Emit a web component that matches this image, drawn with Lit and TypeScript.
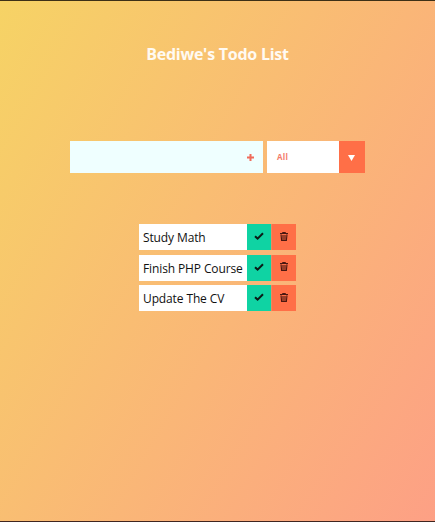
import { LitElement, html, css, svg } from "lit";
import { customElement, state } from "lit/decorators.js";

const checkIcon = html`<svg width="10" height="8" viewBox="0 0 10 8">
  <path d="M1 4.2 3.6 6.6 9 1.2" fill="none" stroke="#0b1c17" stroke-width="2" />
</svg>`;

const trashIcon = html`<svg width="8" height="9" viewBox="0 0 8 9">
  ${svg`<path d="M0 1.5h8M2.5 1.4V.5h3v.9" fill="none" stroke="#4a1710" stroke-width="1" />
  <path d="M1 2.4 1.6 8.4h4.8L7 2.4M3 3v4.6M5 3v4.6" fill="none" stroke="#4a1710" stroke-width="1.1" />`}
</svg>`;

@customElement("app-root")
export class AppRoot extends LitElement {
  static styles = css`
    :host {
      display: flex;
      flex-direction: column;
      align-items: center;
      box-sizing: border-box;
      height: 522px;
      border-top: 1px solid #3d3016;
      border-bottom: 1px solid #3f2520;
      background: linear-gradient(120deg, #f6d365 0%, #fda085 100%) border-box;
      font-family: "Open Sans", "Noto Sans", sans-serif;
    }
    h1 {
      margin: 41px 0 0;
      height: 24px;
      font-size: 16px;
      line-height: 24px;
      font-weight: 700;
      letter-spacing: -0.24px;
      color: #fffaf2;
      white-space: nowrap;
    }
    form {
      display: flex;
      margin: 75px 0 0;
      height: 32px;
    }
    .entry {
      display: flex;
      width: 193px;
      background: #efffff;
    }
    input {
      flex: 1;
      min-width: 0;
      border: 0;
      padding: 0 8px;
      background: none;
      outline: none;
    }
    button {
      border: 0;
      padding: 0;
      display: flex;
      align-items: center;
      justify-content: center;
    }
    .add {
      width: 25px;
      padding-top: 1px;
      background: none;
    }
    .filter {
      display: flex;
      width: 98px;
      margin-left: 4px;
      background: #fff;
    }
    .value {
      flex: 1;
      padding-left: 10px;
      font-size: 8px;
      line-height: 32px;
      font-weight: 700;
      letter-spacing: 0.3px;
      color: #f47d6c;
    }
    .arrow {
      width: 26px;
      background: #ff6f47;
      display: flex;
      align-items: center;
      justify-content: center;
    }
    .arrow svg {
      margin: 2px 1px 0 0;
    }
    ul {
      list-style: none;
      margin: 51px 0 0;
      padding: 0;
      display: grid;
      gap: 4.6px;
    }
    li {
      display: flex;
      width: 157px;
      height: 26px;
      background: #ff6f47;
    }
    .text {
      width: 104px;
      padding-left: 4px;
      background: #fff;
      color: #111;
      font-size: 12px;
      letter-spacing: -0.12px;
      line-height: 28.8px;
      height: 26px;
      white-space: nowrap;
    }
    .done {
      width: 24px;
      background: #0fd3a3;
    }
    .remove {
      width: 25px;
      background: #ff6f47;
      border-left: 1px solid #e98a62;
    }
    .done svg,
    .remove svg {
      margin-bottom: 2px;
    }
  `;

  @state() private todos = ["Study Math", "Finish PHP Course", "Update The CV"];

  render() {
    return html`
      <h1>Bediwe's Todo List</h1>
      <form>
        <div class="entry">
          <input type="text" aria-label="New todo" />
          <button class="add" type="button" aria-label="Add">
            <svg width="7" height="7" viewBox="0 0 7 7">
              <path d="M3.5 0v7M0 3.5h7" stroke="#f06b5a" stroke-width="2" />
            </svg>
          </button>
        </div>
        <div class="filter">
          <span class="value">All</span>
          <span class="arrow">
            <svg width="7" height="6" viewBox="0 0 7 6"><path d="M0 0h7L3.5 6z" fill="#fff" /></svg>
          </span>
        </div>
      </form>
      <ul>
        ${this.todos.map(
          (todo) => html`<li>
            <span class="text">${todo}</span>
            <button class="done" aria-label="Complete">${checkIcon}</button>
            <button class="remove" aria-label="Delete">${trashIcon}</button>
          </li>`
        )}
      </ul>
    `;
  }
}
